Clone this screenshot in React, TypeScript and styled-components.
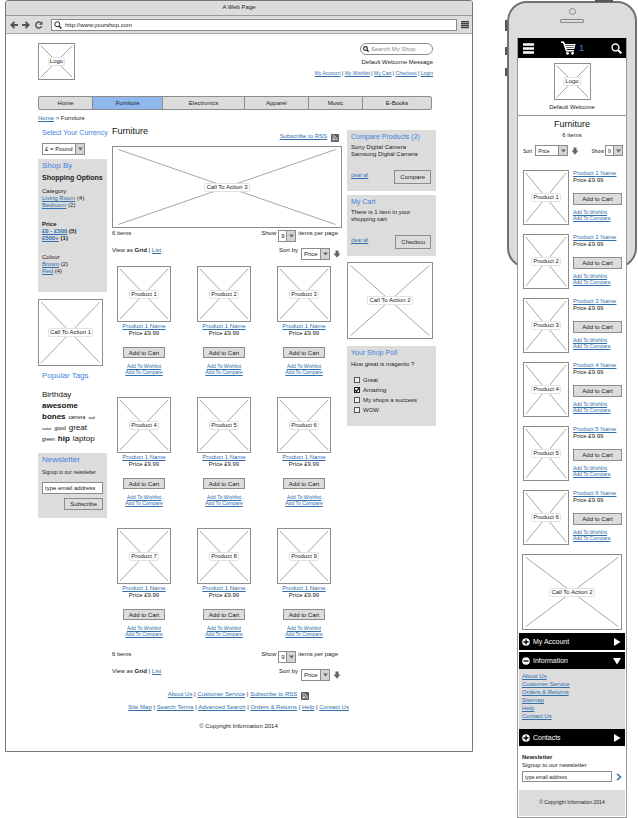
import React from "react";
import styled, { createGlobalStyle, css } from "styled-components";

const ink = "#222";
const line = "#8c8c8c";
const panel = "#dcdcdc";
const link = "#2f6fae";
const accent = "#3f7fdc";

const GlobalStyle = createGlobalStyle`
  *, *::before, *::after { box-sizing: border-box; }
  html, body { margin: 0; padding: 0; background: #fff; }
  body, button, input, select {
    font-family: "Liberation Sans", Arial, sans-serif;
    font-size: 6px;
    line-height: 8px;
    color: ${ink};
  }
  h1, h2, h3, p, ul { margin: 0; padding: 0; font-weight: 400; }
  ul { list-style: none; }
  button, input, select { margin: 0; padding: 0; border-radius: 0; }
  svg { display: block; }
`;

const Page = styled.div`
  display: grid;
  grid-template-columns: minmax(0, 468fr) minmax(0, 130fr);
  gap: 34px;
  align-items: start;
  padding: 0 1px 0 5px;
`;

/* ---------- shared parts ---------- */

const Link = styled.a<{ $small?: boolean }>`
  color: ${link};
  text-decoration: underline;
  ${(p) => p.$small && css`font-size: 5px; line-height: 6px;`}
`;

const Button = styled.button<{ $tall?: boolean }>`
  height: ${(p) => (p.$tall ? 14 : 12)}px;
  padding: 0 5px;
  border: 1px solid ${line};
  background: ${panel};
  line-height: 8px;
  white-space: nowrap;
`;

const Frame = styled.figure<{ $w?: number; $h: number }>`
  display: grid;
  place-items: center;
  width: ${(p) => (p.$w ? `${p.$w}px` : "auto")};
  height: ${(p) => p.$h}px;
  margin: 0;
  padding: 1px;
  border: 1px solid ${line};
  background: #fff;
  > * { grid-area: 1 / 1; }
`;

const Cross = styled.svg`
  width: 100%;
  height: 100%;
  min-height: 0;
  stroke: #a6a6a6;
  stroke-width: 1;
`;

const FrameLabel = styled.figcaption`
  padding: 0 1px;
  border: 1px solid #e2e2e2;
  border-radius: 2px;
  background: #fff;
  line-height: 7px;
  white-space: nowrap;
`;

function Placeholder({ label, w, h }: { label: string; w?: number; h: number }) {
  return (
    <Frame $w={w} $h={h}>
      <Cross viewBox="0 0 100 100" preserveAspectRatio="none" aria-hidden="true">
        <path d="M2 2 98 98M98 2 2 98" vectorEffect="non-scaling-stroke" />
      </Cross>
      <FrameLabel>{label}</FrameLabel>
    </Frame>
  );
}

const SelectBox = styled.span<{ $w: number; $arrow: number; $small?: boolean }>`
  display: inline-grid;
  grid-template-columns: minmax(0, 1fr) ${(p) => p.$arrow}px;
  width: ${(p) => p.$w}px;
  height: ${(p) => (p.$small ? 11 : 12)}px;
  border: 1px solid ${line};
  background: #fff;
  select {
    grid-area: 1 / 1 / 2 / 3;
    width: 100%;
    height: 100%;
    padding-left: 2px;
    border: 0;
    background: transparent;
    appearance: none;
    font-size: ${(p) => (p.$small ? 5 : 6)}px;
  }
  i {
    grid-area: 1 / 2;
    display: grid;
    place-items: center;
    border-left: 1px solid ${line};
    background: #d4d4d4;
    pointer-events: none;
  }
`;

function Dropdown(props: { label: string; value: string; w: number; arrow?: number; small?: boolean }) {
  return (
    <SelectBox $w={props.w} $arrow={props.arrow ?? 9} $small={props.small}>
      <select aria-label={props.label} defaultValue={props.value}>
        <option>{props.value}</option>
      </select>
      <i>
        <svg width="5" height="4" viewBox="0 0 5 4"><path d="M0 .5h5L2.500 3.500z" fill="#666" /></svg>
      </i>
    </SelectBox>
  );
}

const BareButton = styled.button`
  display: grid;
  place-items: center;
  border: 0;
  background: none;
  color: inherit;
`;

function SortArrow() {
  return (
    <BareButton aria-label="Sort direction">
      <svg width="8" height="8" viewBox="0 0 8 8"><path d="M2.500.5h3v3h2L4 7.700.500 3.500h2z" fill="#666" /></svg>
    </BareButton>
  );
}

function RssIcon() {
  return (
    <svg width="8" height="8" viewBox="0 0 16 16" aria-hidden="true">
      <rect width="16" height="16" rx="2" fill="#5c5c5c" />
      <circle cx="4.500" cy="11.500" r="1.500" fill="#fff" />
      <path d="M3 7.500a5.500 5.500 0 0 1 5.500 5.500M3 3.500A9.500 9.500 0 0 1 12.500 13" fill="none" stroke="#fff" strokeWidth="1.800" />
    </svg>
  );
}

function SearchIcon({ size, color = "#222", weight = 2 }: { size: number; color?: string; weight?: number }) {
  return (
    <svg width={size} height={size} viewBox="0 0 16 16" fill="none" stroke={color} aria-hidden="true">
      <circle cx="6.500" cy="6.500" r="5" strokeWidth={weight} />
      <path d="m10.500 10.500 4.500 4.500" strokeWidth={weight + 1} />
    </svg>
  );
}

/* ---------- desktop browser ---------- */

const Browser = styled.section`
  border: 1px solid #777;
  border-radius: 3px 3px 0 0;
  background: #fff;
`;

const TitleBar = styled.header`
  height: 15px;
  padding-top: 2px;
  border-bottom: 1px solid #999;
  border-radius: 2px 2px 0 0;
  background: ${panel};
  text-align: center;
`;

const Toolbar = styled.div`
  display: flex;
  align-items: center;
  gap: 4px;
  height: 18px;
  padding: 0 3px 0 4px;
  border-bottom: 1px solid #aaa;
  background: ${panel};
`;

const Address = styled.label`
  display: flex;
  flex: 1;
  align-items: center;
  gap: 3px;
  height: 12px;
  margin-left: 3px;
  padding-left: 2px;
  border: 1px solid ${line};
  background: #fff;
  input { flex: 1; min-width: 0; border: 0; background: none; outline: 0; }
`;

const Shop = styled.div`
  padding: 9px 36px 20px 32px;
`;

const ShopHeader = styled.header`
  display: flex;
  justify-content: space-between;
  margin-right: 3px;
`;

const HeaderSide = styled.div`
  display: flex;
  flex-direction: column;
  align-items: flex-end;
  p { margin-top: 3px; }
`;

const SearchPill = styled.label`
  display: flex;
  align-items: center;
  gap: 2px;
  width: 73px;
  height: 12px;
  padding: 0 4px 0 2px;
  border: 1px solid ${line};
  border-radius: 6px;
  input { flex: 1; min-width: 0; border: 0; outline: 0; background: none; }
  input::placeholder { color: #888; opacity: 1; }
`;

const LinkRow = styled.nav<{ $small?: boolean }>`
  font-size: ${(p) => (p.$small ? 5 : 6)}px;
  margin-top: 3px;
  white-space: nowrap;
`;

const MainNav = styled.nav`
  display: flex;
  margin: 16px 4px 0 0;
  border: 1px solid ${line};
  border-radius: 2px;
  background: ${panel};
`;

const NavItem = styled.a<{ $grow: number; $active?: boolean }>`
  flex: ${(p) => p.$grow} 1 0;
  height: 12px;
  line-height: 12px;
  text-align: center;
  color: ${ink};
  text-decoration: none;
  background: ${(p) => (p.$active ? "#8fb8ef" : "transparent")};
  & + & { border-left: 1px solid ${line}; }
`;

const Crumbs = styled.nav`
  margin-top: 4px;
`;

const Columns = styled.div`
  display: grid;
  grid-template-columns: minmax(0, 69fr) minmax(0, 230fr) minmax(0, 89fr);
  gap: 5px;
  align-items: start;
  margin-top: 4px;
`;

const SideColumn = styled.aside<{ $top: number }>`
  padding-top: ${(p) => p.$top}px;
`;

const Panel = styled.section<{ $top?: number; $bottom: number }>`
  margin-top: ${(p) => p.$top ?? 0}px;
  padding: 2px 4px ${(p) => p.$bottom}px;
  background: ${panel};
`;

const SideTitle = styled.h2<{ $size: number }>`
  font-size: ${(p) => p.$size}px;
  line-height: 9px;
  color: ${accent};
  white-space: nowrap;
`;

const CurrencyPicker = styled.div`
  padding: 0 0 4px 4px;
  span { margin-top: 6px; }
`;

const OptionsTitle = styled.h3`
  margin: 4px 0 6px;
  font-size: 7px;
  line-height: 8px;
  font-weight: 700;
  white-space: nowrap;
`;

const Facets = styled.div`
  display: grid;
  gap: 12px;
`;

const Facet = styled.div<{ $bold?: boolean }>`
  line-height: 7px;
  font-weight: ${(p) => (p.$bold ? 700 : 400)};
`;

const Spaced = styled.div<{ $top: number; $right?: number }>`
  margin: ${(p) => p.$top}px ${(p) => p.$right ?? 0}px 0 0;
`;

const TagArea = styled.section`
  margin-top: 5px;
  padding-left: 4px;
`;

const TagLines = styled.ul`
  margin-top: 10px;
  li { height: 11px; line-height: 11px; white-space: nowrap; }
`;

const Tag = styled.span<{ $size: number; $bold?: boolean }>`
  margin-right: 3px;
  font-size: ${(p) => p.$size}px;
  font-weight: ${(p) => (p.$bold ? 700 : 400)};
  line-height: 8px;
  color: #111;
`;

const SmallText = styled.p`
  margin-top: 5px;
  font-size: 5px;
  line-height: 7px;
  white-space: nowrap;
`;

const TextBox = styled.input<{ $small?: boolean }>`
  width: 100%;
  min-width: 0;
  height: ${(p) => (p.$small ? 11 : 12)}px;
  padding: 0 2px;
  border: 1px solid ${line};
  background: #fff;
  font-size: ${(p) => (p.$small ? 5 : 6)}px;
  &::placeholder { color: ${ink}; opacity: 1; }
`;

const SubscribeForm = styled.form`
  display: flex;
  flex-direction: column;
  align-items: flex-end;
  gap: 4px;
  margin-top: 6px;
`;

const Main = styled.main`
  min-width: 0;
`;

const MainHead = styled.div`
  display: flex;
  justify-content: space-between;
  height: 16px;
  margin-bottom: 4px;
  padding-right: 3px;
`;

const PageTitle = styled.h1`
  font-size: 9px;
  line-height: 11px;
  color: #111;
`;

const Feed = styled.div`
  display: flex;
  align-items: flex-end;
  gap: 4px;
  a { padding-bottom: 2px; }
`;

const ListTools = styled.div<{ $top: number }>`
  margin-top: ${(p) => p.$top}px;
`;

const ToolRow = styled.div<{ $right: number }>`
  display: flex;
  justify-content: space-between;
  align-items: flex-start;
  padding-right: ${(p) => p.$right}px;
  & + & { margin-top: 4px; }
`;

const ToolGroup = styled.div<{ $gap: number; $drop: number }>`
  display: flex;
  align-items: flex-start;
  gap: ${(p) => p.$gap}px;
  white-space: nowrap;
  > span, > button { margin-top: ${(p) => p.$drop}px; }
  > button { height: 12px; }
`;

const ProductGrid = styled.ul`
  display: grid;
  grid-template-columns: repeat(3, 54px);
  justify-content: space-between;
  row-gap: 22px;
  margin-top: 6px;
  padding: 0 11px 0 5px;
`;

const Product = styled.li`
  display: flex;
  flex-direction: column;
  align-items: center;
  line-height: 7px;
  figure { margin-bottom: 1px; }
  button { height: 11px; margin: 10px 0 5px; }
  a { white-space: nowrap; }
`;

const PanelText = styled.p<{ $top: number }>`
  margin-top: ${(p) => p.$top}px;
  line-height: 7px;
`;

const PanelActions = styled.div`
  display: flex;
  justify-content: space-between;
  align-items: flex-start;
  margin: 12px 1px 0 0;
  a { margin-top: 2px; }
`;

const Poll = styled.div`
  margin: 7px 0 0 3px;
`;

const PollOption = styled.label`
  display: flex;
  align-items: center;
  gap: 3px;
  height: 10px;
  white-space: nowrap;
`;

const Tick = styled.input`
  width: 6px;
  height: 6px;
  border: 1px solid #555;
  background: #eee;
  appearance: none;
  &:checked {
    border-color: #222;
    background: #eee url("data:image/svg+xml,%3Csvg xmlns='http://www.w3.org/2000/svg' viewBox='0 0 4 4'%3E%3Cpath d='M0 2l1.500 1.500L4 0' fill='none' stroke='%23111' stroke-width='1.200'/%3E%3C/svg%3E") center / 100% 100%;
  }
`;

const Footer = styled.footer`
  margin-top: 9px;
  padding-left: 3px;
  text-align: center;
  line-height: 9px;
  p { margin-top: 10px; }
`;

const FooterLinks = styled.nav`
  display: flex;
  justify-content: center;
  gap: 4px;
  height: 9px;
  white-space: nowrap;
  & + & { margin-top: 4px; }
  svg { margin-top: 2px; }
`;

/* ---------- phone ---------- */

const Phone = styled.section`
  display: grid;
  > * { grid-area: 1 / 1; }
`;

const Shell = styled.div`
  position: relative;
  display: flex;
  flex-direction: column;
  align-items: center;
  height: 267px;
  margin-top: 1px;
  padding-top: 5px;
  border: 2px solid #707070;
  border-radius: 20px;
  background: ${panel};
`;

const SideKey = styled.span<{ $y: number; $h: number }>`
  position: absolute;
  left: -4px;
  top: ${(p) => p.$y}px;
  width: 2px;
  height: ${(p) => p.$h}px;
  background: #555;
`;

const PowerKey = styled.span`
  position: absolute;
  right: 22px;
  top: -3px;
  width: 18px;
  height: 2px;
  background: #555;
`;

const Lens = styled.span`
  width: 7px;
  height: 7px;
  border: 1px solid #888;
  border-radius: 50%;
`;

const Speaker = styled.span`
  width: 24px;
  height: 4px;
  margin-top: 4px;
  border: 1px solid #888;
  border-radius: 1px;
`;

const Screen = styled.div`
  z-index: 1;
  min-width: 0;
  margin: 38px 10px 0;
  padding-bottom: 1px;
  border: solid #999;
  border-width: 0 1px 1px;
  background: #fff;
`;

const AppBar = styled.header`
  display: flex;
  justify-content: space-between;
  align-items: center;
  height: 20px;
  padding: 0 4px 0 5px;
  background: #000;
  color: #fff;
`;

const CartButton = styled(BareButton)`
  display: flex;
  align-items: center;
  gap: 3px;
  color: #3f86e0;
  font-size: 9px;
`;

const Brand = styled.div`
  display: flex;
  flex-direction: column;
  align-items: center;
  padding: 5px 0 4px;
  border-bottom: 1px solid #999;
  p { margin-top: 3px; }
`;

const MobileTitle = styled.div`
  padding-top: 3px;
  text-align: center;
  p { margin-top: 1px; }
`;

const MobileTools = styled.div`
  display: flex;
  justify-content: space-between;
  margin-top: 6px;
  padding: 0 3px 0 5px;
`;

const MobileGroup = styled.div<{ $gap: number }>`
  display: flex;
  align-items: center;
  gap: ${(p) => p.$gap}px;
  font-size: 5px;
`;

const MobileList = styled.ul`
  display: grid;
  gap: 9px;
  margin-top: 14px;
  padding: 0 4px 0 5px;
`;

const MobileProduct = styled.li`
  display: grid;
  grid-template-columns: 46px minmax(0, 1fr);
  gap: 4px;
  line-height: 7px;
`;

const MobileInfo = styled.div`
  display: flex;
  flex-direction: column;
  align-items: flex-start;
  white-space: nowrap;
  button { width: 100%; margin: 9px 0 4px; }
`;

const MobilePromo = styled.div`
  margin: 9px 4px 3px;
`;

const AccordionBar = styled.button`
  display: flex;
  align-items: center;
  gap: 3px;
  width: 100%;
  height: 17px;
  padding: 0 4px 0 3px;
  border: 0;
  background: #000;
  color: #fff;
  font-size: 7px;
  & + & { margin-top: 2px; }
  svg:last-child { margin-left: auto; }
`;

const Accordion = styled.div`
  margin: 0 1px;
`;

const AccordionLinks = styled.ul`
  padding: 3px 3px 9px;
  background: ${panel};
  li { height: 8px; }
`;

const MobileNewsletter = styled.section`
  padding: 7px 4px 0;
`;

const MobileForm = styled.form`
  display: flex;
  align-items: center;
  gap: 4px;
  margin-top: 2px;
`;

const MobileFooter = styled.footer`
  margin: 8px 1px 0;
  height: 26px;
  background: ${panel};
  font-size: 5px;
  line-height: 24px;
  text-align: center;
`;

function Separated({ items, small }: { items: string[]; small?: boolean }) {
  return (
    <span>
      {items.map((item, i) => (
        <React.Fragment key={item}>
          {i > 0 && " | "}
          <Link href="#" $small={small}>{item}</Link>
        </React.Fragment>
      ))}
    </span>
  );
}

function ListControls({ top }: { top: number }) {
  return (
    <ListTools $top={top}>
      <ToolRow $right={4}>
        <div>6 items</div>
        <ToolGroup $gap={2} $drop={1}>
          <div>Show</div>
          <Dropdown label="Items per page" value="9" w={18} />
          <div>items per page</div>
        </ToolGroup>
      </ToolRow>
      <ToolRow $right={1}>
        <div>View as <b>Grid</b> | <Link href="#">List</Link></div>
        <ToolGroup $gap={3} $drop={2}>
          <div>Sort by</div>
          <Dropdown label="Sort by" value="Price" w={29} />
          <SortArrow />
        </ToolGroup>
      </ToolRow>
    </ListTools>
  );
}

function FacetGroup({ title, items, bold }: { title: string; items: [string, number][]; bold?: boolean }) {
  return (
    <Facet $bold={bold}>
      <div>{title}</div>
      {items.map(([name, n]) => (
        <div key={name}><Link href="#">{name}</Link> ({n})</div>
      ))}
    </Facet>
  );
}

function ToggleIcon({ open }: { open?: boolean }) {
  return (
    <svg width="8" height="8" viewBox="0 0 8 8" aria-hidden="true">
      <circle cx="4" cy="4" r="3.800" fill="#fff" />
      <path d={open ? "M1.500 4h5" : "M1.500 4h5M4 1.500v5"} stroke="#000" strokeWidth="1.300" />
    </svg>
  );
}

function Section({ title, open }: { title: string; open?: boolean }) {
  return (
    <AccordionBar aria-expanded={!!open}>
      <ToggleIcon open={open} />
      {title}
      <svg width="8" height="8" viewBox="0 0 8 8" aria-hidden="true">
        <path d={open ? "M0 1h8L4 7.500z" : "M1 0v8l6.500-4z"} fill="#fff" />
      </svg>
    </AccordionBar>
  );
}

const navItems: [string, number][] = [
  ["Home", 54], ["Furniture", 70], ["Electronics", 82], ["Apparel", 64], ["Music", 54], ["E-Books", 69],
];

const tagLines: [string, number, boolean?][][] = [
  [["Birthday", 8]],
  [["awesome", 8, true]],
  [["bones", 8, true], ["camera", 5], ["sad", 4]],
  [["value", 4], ["good", 5], ["great", 8]],
  [["green", 5], ["hip", 8, true], ["laptop", 8]],
];

function DesktopShop() {
  return (
    <Browser>
      <TitleBar>A Web Page</TitleBar>
      <Toolbar>
        <BareButton aria-label="Back">
          <svg width="8" height="8" viewBox="0 0 8 8" fill="none" stroke="#555" strokeWidth="1.900"><path d="M4.500.8 1.300 4l3.200 3.200M1.500 4H8" /></svg>
        </BareButton>
        <BareButton aria-label="Forward">
          <svg width="8" height="8" viewBox="0 0 8 8" fill="none" stroke="#555" strokeWidth="1.900"><path d="M3.500.8 6.700 4 3.500 7.200M6.500 4H0" /></svg>
        </BareButton>
        <BareButton aria-label="Reload">
          <svg width="10" height="8" viewBox="0 0 10 8"><path d="M7 2A3 3 0 1 0 7.600 5.200" fill="none" stroke="#555" strokeWidth="1.500" /><path d="M8.500.2v3.600H5z" fill="#555" /></svg>
        </BareButton>
        <Address>
          <SearchIcon size={8} />
          <input aria-label="Address" defaultValue="http://www.yourshop.com" />
        </Address>
        <BareButton aria-label="Menu">
          <svg width="8" height="8" viewBox="0 0 8 8" stroke="#444"><path d="M0 .5h8M0 2.500h8M0 4.500h8M0 6.500h8" strokeWidth="1.300" /></svg>
        </BareButton>
      </Toolbar>
      <Shop>
        <ShopHeader>
          <Placeholder label="Logo" w={37} h={37} />
          <HeaderSide>
            <SearchPill>
              <SearchIcon size={6} weight={3} />
              <input aria-label="Search" placeholder="Search My Shop" />
            </SearchPill>
            <p>Default Welcome Message</p>
            <LinkRow $small>
              <Separated small items={["My Account", "My Wishlist", "My Cart", "Checkout", "Login"]} />
            </LinkRow>
          </HeaderSide>
        </ShopHeader>
        <MainNav>
          {navItems.map(([name, grow]) => (
            <NavItem key={name} href="#" $grow={grow} $active={name === "Furniture"}>{name}</NavItem>
          ))}
        </MainNav>
        <Crumbs><Link href="#">Home</Link> &gt; Furniture</Crumbs>
        <Columns>
          <SideColumn $top={2}>
            <CurrencyPicker>
              <SideTitle $size={7}>Select Your Currency</SideTitle>
              <Dropdown label="Currency" value="£ = Pound" w={43} />
            </CurrencyPicker>
            <Panel $bottom={17}>
              <SideTitle $size={8}>Shop By</SideTitle>
              <OptionsTitle>Shopping Options</OptionsTitle>
              <Facets>
                <FacetGroup title="Category" items={[["Living Room", 4], ["Bedroom", 2]]} />
                <FacetGroup bold title="Price" items={[["£0 - £500", 5], ["£500+", 1]]} />
                <FacetGroup title="Colour" items={[["Brown", 2], ["Red", 4]]} />
              </Facets>
            </Panel>
            <Spaced $top={7} $right={4}><Placeholder label="Call To Action 1" h={67} /></Spaced>
            <TagArea>
              <SideTitle $size={8}>Popular Tags</SideTitle>
              <TagLines>
                {tagLines.map((tags, i) => (
                  <li key={i}>
                    {tags.map(([t, size, bold]) => <Tag key={t} $size={size} $bold={bold}>{t}</Tag>)}
                  </li>
                ))}
              </TagLines>
            </TagArea>
            <Panel $top={8} $bottom={8}>
              <SideTitle $size={8}>Newsletter</SideTitle>
              <SmallText>Signup to our newsletter</SmallText>
              <SubscribeForm>
                <TextBox aria-label="Email address" placeholder="type email address" />
                <Button type="button">Subscribe</Button>
              </SubscribeForm>
            </Panel>
          </SideColumn>

          <Main>
            <MainHead>
              <PageTitle>Furniture</PageTitle>
              <Feed><Link href="#">Subscribe to RSS</Link><RssIcon /></Feed>
            </MainHead>
            <Placeholder label="Call To Action 3" h={82} />
            <ListControls top={1} />
            <ProductGrid>
              {[1, 2, 3, 4, 5, 6, 7, 8, 9].map((n) => (
                <Product key={n}>
                  <Placeholder label={`Product ${n}`} w={54} h={56} />
                  <Link href="#">Product 1 Name</Link>
                  <span>Price £9.99</span>
                  <Button>Add to Cart</Button>
                  <Link href="#" $small>Add To Wishlist</Link>
                  <Link href="#" $small>Add To Compare</Link>
                </Product>
              ))}
            </ProductGrid>
            <ListControls top={13} />
          </Main>

          <SideColumn $top={4}>
            <Panel $bottom={7}>
              <SideTitle $size={7}>Compare Products (2)</SideTitle>
              <PanelText $top={3}>Sony Digital Camera<br />Samsung Digital Camera</PanelText>
              <PanelActions><Link href="#" $small>clear all</Link><Button $tall>Compare</Button></PanelActions>
            </Panel>
            <Panel $top={4} $bottom={7}>
              <SideTitle $size={7}>My Cart</SideTitle>
              <PanelText $top={3}>There is 1 item in your<br />shopping cart</PanelText>
              <PanelActions><Link href="#" $small>clear all</Link><Button $tall>Checkou</Button></PanelActions>
            </Panel>
            <Spaced $top={6} $right={3}><Placeholder label="Call To Action 2" h={77} /></Spaced>
            <Panel $top={7} $bottom={11}>
              <SideTitle $size={7}>Your Shop Poll</SideTitle>
              <PanelText $top={4}>How great is magento ?</PanelText>
              <Poll>
                {["Great", "Amazing", "My shops a success", "WOW"].map((o) => (
                  <PollOption key={o}>
                    <Tick type="checkbox" defaultChecked={o === "Amazing"} />
                    {o}
                  </PollOption>
                ))}
              </Poll>
            </Panel>
          </SideColumn>
        </Columns>
        <Footer>
          <FooterLinks>
            <Separated items={["About Us", "Customer Service", "Subscribe to RSS"]} />
            <RssIcon />
          </FooterLinks>
          <FooterLinks>
            <Separated items={["Site Map", "Search Terms", "Advanced Search", "Orders & Returns", "Help", "Contact Us"]} />
          </FooterLinks>
          <p>© Copyright Information 2014</p>
        </Footer>
      </Shop>
    </Browser>
  );
}

function PhoneShop() {
  return (
    <Phone>
      <Shell>
        <SideKey $y={17} $h={11} />
        <SideKey $y={44} $h={8} />
        <SideKey $y={65} $h={8} />
        <PowerKey />
        <Lens />
        <Speaker />
      </Shell>
      <Screen>
        <AppBar>
          <BareButton aria-label="Menu">
            <svg width="11" height="11" viewBox="0 0 11 11"><path d="M0 1.500h11M0 5.500h11M0 9.500h11" stroke="#fff" strokeWidth="2.400" /></svg>
          </BareButton>
          <CartButton aria-label="Cart, 1 item">
            <svg width="15" height="14" viewBox="0 0 15 14" fill="none" stroke="#fff">
              <path d="M0 1.200h2.600l2.900 8.500h7.500" strokeWidth="1.600" />
              <path d="M3.800 3.500h10.400M4.500 5.500h9M5.200 7.500h7.800" strokeWidth="1.200" />
              <path d="M6 3v5M8 3v5M10 3v5M12 3v5M14 3l-1 5" strokeWidth=".9" />
              <circle cx="6.500" cy="12.300" r="1.400" fill="#fff" stroke="none" />
              <circle cx="11.500" cy="12.300" r="1.400" fill="#fff" stroke="none" />
            </svg>
            1
          </CartButton>
          <BareButton aria-label="Search"><SearchIcon size={11} color="#fff" weight={2} /></BareButton>
        </AppBar>
        <Brand>
          <Placeholder label="Logo" w={37} h={37} />
          <p>Default Welcome</p>
        </Brand>
        <MobileTitle>
          <PageTitle as="h2">Furniture</PageTitle>
          <p>6 items</p>
        </MobileTitle>
        <MobileTools>
          <MobileGroup $gap={3}>
            Sort
            <Dropdown small label="Sort" value="Price" w={33} />
            <SortArrow />
          </MobileGroup>
          <MobileGroup $gap={1}>
            Show
            <Dropdown small label="Show" value="9" w={18} />
          </MobileGroup>
        </MobileTools>
        <MobileList>
          {[1, 2, 3, 4, 5, 6].map((n) => (
            <MobileProduct key={n}>
              <Placeholder label={`Product ${n}`} h={55} />
              <MobileInfo>
                <Link href="#">Product {n} Name</Link>
                <span>Price £9.99</span>
                <Button>Add to Cart</Button>
                <Link href="#" $small>Add To Wishlist</Link>
                <Link href="#" $small>Add To Compare</Link>
              </MobileInfo>
            </MobileProduct>
          ))}
        </MobileList>
        <MobilePromo><Placeholder label="Call To Action 2" h={76} /></MobilePromo>
        <Accordion>
          <Section title="My Account" />
          <Section title="Information" open />
          <AccordionLinks>
            {["About Us", "Customer Service", "Orders & Returns", "Sitemap", "Help", "Contact Us"].map((t) => (
              <li key={t}><Link href="#">{t}</Link></li>
            ))}
          </AccordionLinks>
          <Section title="Contacts" />
        </Accordion>
        <MobileNewsletter>
          <b>Newsletter</b>
          <p>Signup to our newsletter</p>
          <MobileForm>
            <TextBox $small aria-label="Email address for newsletter" placeholder="type email address" />
            <BareButton type="button" aria-label="Sign up">
              <svg width="6" height="8" viewBox="0 0 6 8"><path d="M1 .8 4.500 4 1 7.200" fill="none" stroke="#3d73b0" strokeWidth="1.600" /></svg>
            </BareButton>
          </MobileForm>
        </MobileNewsletter>
        <MobileFooter>© Copyright Information 2014</MobileFooter>
      </Screen>
    </Phone>
  );
}

export default function App() {
  return (
    <>
      <GlobalStyle />
      <Page>
        <DesktopShop />
        <PhoneShop />
      </Page>
    </>
  );
}
